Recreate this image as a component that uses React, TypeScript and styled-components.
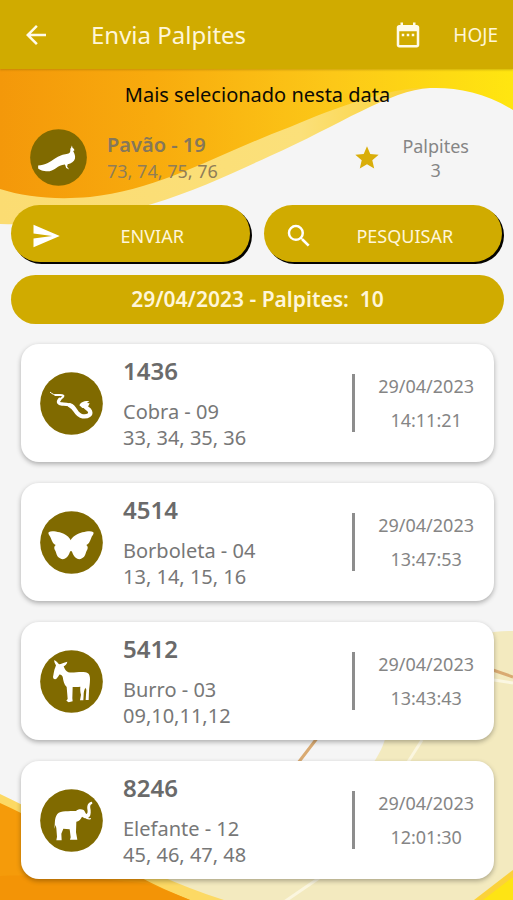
import React from "react";
import styled, { createGlobalStyle } from "styled-components";

const gold = "#d0ab00";
const olive = "#806a00";
const paleText = "#fff6d8";

const GlobalStyle = createGlobalStyle`
  *, *::before, *::after { box-sizing: border-box; }
  body {
    margin: 0;
    background: #f5f5f5;
    font-family: "Noto Sans", "Open Sans", sans-serif;
  }
`;

const Page = styled.div`
  position: relative;
  min-height: 100vh;
  overflow: hidden;
`;

const Backdrop = styled.svg`
  position: absolute;
  inset: 0;
  z-index: -1;
  width: 100%;
  height: 100%;
`;

const Header = styled.header`
  display: flex;
  align-items: center;
  min-height: 69px;
  padding: 0 15px 0 21px;
  background: ${gold};
  box-shadow: 0 1px 2px rgba(120, 90, 0, 0.35);
`;

const IconButton = styled.button`
  display: flex;
  padding: 0;
  border: 0;
  background: none;
  color: #fffbea;
  cursor: pointer;
`;

const Title = styled.h1`
  flex: 1;
  margin: 0 0 0 40px;
  font-size: 24px;
  line-height: 32px;
  font-weight: 400;
  color: ${paleText};
`;

const TodayButton = styled(IconButton)`
  margin-left: 30px;
  font-family: inherit;
  font-size: 19px;
  line-height: 24px;
  color: ${paleText};
`;

const Content = styled.main`
  padding: 10px 9px 21px 11px;
`;

const Subtitle = styled.h2`
  margin: 0;
  text-align: center;
  font-size: 20px;
  line-height: 32px;
  font-weight: 400;
  color: #0c0a04;
`;

const Featured = styled.section`
  display: flex;
  align-items: center;
  margin-top: 18px;
  padding: 0 35px 0 19px;
`;

const Badge = styled.svg<{ $size: number }>`
  flex: none;
  width: ${(p) => p.$size}px;
  height: ${(p) => p.$size}px;
`;

const FeaturedText = styled.div`
  flex: 1;
  margin-left: 20px;
`;

const FeaturedName = styled.p`
  margin: 0;
  font-size: 20px;
  line-height: 27px;
  font-weight: 600;
  color: #85775a;
`;

const FeaturedNumbers = styled.p`
  margin: 0;
  font-size: 18px;
  line-height: 27px;
  color: #8f7d58;
`;

const StarMark = styled.span`
  display: flex;
  color: #d9ae0a;
`;

const Votes = styled.div`
  display: flex;
  flex-direction: column;
  align-items: center;
  margin-left: 21px;
  font-size: 18px;
  line-height: 24px;
  color: #858585;
`;

const Actions = styled.div`
  display: grid;
  grid-template-columns: 1fr 1fr;
  gap: 14px;
  margin-top: 19px;
  padding-right: 2px;
`;

const ActionButton = styled.button`
  display: flex;
  align-items: center;
  height: 57px;
  padding: 4px 20px 0;
  border: 0;
  border-radius: 29px;
  background: ${gold};
  box-shadow: 2px 2px 0 #050400;
  color: #ffffff;
  font-family: inherit;
  font-size: 18px;
  cursor: pointer;
`;

const ActionLabel = styled.span`
  flex: 1;
  padding-left: 14px;
  text-align: center;
  color: ${paleText};
`;

const Summary = styled.p`
  margin: 13px 0 0;
  border-radius: 25px;
  background: ${gold};
  text-align: center;
  white-space: pre;
  font-size: 21px;
  line-height: 49px;
  font-weight: 600;
  color: ${paleText};
`;

const List = styled.ul`
  display: flex;
  flex-direction: column;
  gap: 21px;
  margin: 20px 10px 0;
  padding: 0;
  list-style: none;
`;

const Card = styled.li`
  display: flex;
  align-items: center;
  min-height: 118px;
  padding: 0 20px 0 19px;
  border-radius: 18px;
  background: #ffffff;
  box-shadow: 0 2px 5px rgba(0, 0, 0, 0.3);
`;

const CardText = styled.div`
  flex: 1;
  margin-left: 20px;
`;

const Code = styled.p`
  margin: 0 0 12px;
  font-size: 24px;
  line-height: 32px;
  font-weight: 600;
  color: #6a6a6a;
`;

const Line = styled.p`
  margin: 0;
  font-size: 20px;
  line-height: 26px;
  color: #777777;
`;

const Stamp = styled.div`
  display: flex;
  align-items: center;
  height: 58px;
  padding-left: 23px;
  border-left: 3px solid #8d8d8d;
`;

const StampText = styled.time`
  display: flex;
  flex-direction: column;
  text-align: center;
  font-size: 18px;
  line-height: 34px;
  color: #858585;
`;

type Animal = "peacock" | "snake" | "butterfly" | "donkey" | "elephant";

const shapes: Record<Animal, React.ReactNode> = {
  peacock: (
    <path d="M27 121c10 0 22-3 32-8C75 104 88 92 104 87C116 82 128 84 132 78C136 72 131 66 136 62l3-7 2 7c5 3 6 6 6 9l-4 2c5 9 8 17 6 26c-3 10-12 16-24 18l-2 8 7 9-10-5-4-11c-14 1-20 5-30 12c-12 8-24 13-38 9c-8-1-14-2-21-8z" />
  ),
  snake: (
    <>
      <g fill="none" stroke="#fff" strokeLinecap="round" strokeLinejoin="round">
        <path d="M31 61C37 66 42 69 50 69" strokeWidth="3" />
        <path d="M46 69C56 70 66 67 70 71C72 75 62 79 58 84" strokeWidth="6" />
        <path d="M59 82C52 90 56 95 66 96C78 97 88 97 95 102" strokeWidth="10" />
        <path d="M90 100C108 106 106 130 128 133C144 135 154 128 150 118C147 111 138 109 134 102" strokeWidth="13" />
      </g>
      <path d="M118 100C122 91 130 86 148 87L141 93L149 94L145 102L140 107L127 108Z" />
    </>
  ),
  butterfly: (
    <path d="M92 88c4-9 17-19 35-24 13-3 26-5 32-1 5 4-2 10-5 17-5 12-7 19-15 22 6 5 5 11 1 17-4 8-3 17-14 23-10 6-21 1-27-12-3-7-3-10-6-10s-3 3-6 10c-6 13-17 18-27 12-11-6-10-15-14-23-4-6-5-12 1-17-8-3-10-10-15-22-3-7-10-13-5-17 6-4 19-2 32 1 18 5 29 15 33 24z" />
  ),
  donkey: (
    <path d="M43 30C49 34 54 38 57 43C64 42 71 38 82 35C81 43 75 47 71 49C74 57 78 64 85 67C99 70 119 64 136 67C146 68 150 76 150 87C150 100 148 112 147 122L146 150H137L139 119L136 113C132 121 131 128 131 134L130 151H120L123 134C121 127 120 118 121 110C112 112 105 111 98 111L97 145L98 154L86 157L79 152L83 147L80 111C72 103 70 93 68 80C65 76 62 73 58 74C54 80 51 86 46 88C39 88 38 82 40 76C42 67 42 60 46 52L48 46C45 41 42 36 43 30Z" />
  ),
  elephant: (
    <>
      <path d="M43 120C46 105 42 88 52 75C62 64 88 67 108 66C113 60 124 59 131 63C135 67 136 73 139 75C144 74 143 66 142 60C141 48 145 39 156 38L157 44C148 47 151 55 152 63C153 75 151 84 143 88H138C133 88 129 85 126 83C122 93 116 96 109 98L108 130L112 152H90L92 145L89 121L70 119L64 134L65 154H49L51 143L49 118L47 108Z" />
      <path d="M134 82C140 89 146 91 151 89" fill="none" stroke="#fff" strokeWidth="4" strokeLinecap="round" />
    </>
  ),
};

const AnimalBadge = ({ animal, size }: { animal: Animal; size: number }) => (
  <Badge $size={size} viewBox="0 0 189 189" fill="#fff" aria-hidden="true">
    <circle cx="94.5" cy="94.5" r="94" fill={olive} />
    {shapes[animal]}
  </Badge>
);

const Glyph = ({ d, size }: { d: string; size: number }) => (
  <svg width={size} height={size} viewBox="0 0 24 24" fill="currentColor" aria-hidden="true">
    <path d={d} />
  </svg>
);

const paths = {
  back: "M20 11H7.83l5.59-5.59L12 4l-8 8 8 8 1.41-1.41L7.83 13H20v-2z",
  calendar:
    "M19 4h-1V2h-2v2H8V2H6v2H5C3.9 4 3 4.9 3 6v14c0 1.1.9 2 2 2h14c1.1 0 2-.9 2-2V6c0-1.1-.9-2-2-2zm0 16H5V9h14v11zM7 11h2v2H7zm4 0h2v2h-2zm4 0h2v2h-2z",
  send: "M2.01 21L23 12 2.01 3 2 10l15 2-15 2z",
  search:
    "M15.5 14h-.79l-.28-.27A6.471 6.471 0 0 0 16 9.5 6.5 6.5 0 1 0 9.5 16c1.61 0 3.09-.59 4.23-1.57l.27.28v.79l5 4.99L20.49 19l-4.99-5zm-6 0C7.01 14 5 11.99 5 9.5S7.01 5 9.5 5 14 7.01 14 9.5 11.99 14 9.5 14z",
  star: "M12 17.27L18.18 21l-1.64-7.03L22 9.24l-7.19-.61L12 2 9.19 8.63 2 9.24l5.46 4.73L5.82 21z",
};

const guesses: { code: string; animal: Animal; name: string; numbers: string; time: string }[] = [
  { code: "1436", animal: "snake", name: "Cobra - 09", numbers: "33, 34, 35, 36", time: "14:11:21" },
  { code: "4514", animal: "butterfly", name: "Borboleta - 04", numbers: "13, 14, 15, 16", time: "13:47:53" },
  { code: "5412", animal: "donkey", name: "Burro - 03", numbers: "09,10,11,12", time: "13:43:43" },
  { code: "8246", animal: "elephant", name: "Elefante - 12", numbers: "45, 46, 47, 48", time: "12:01:30" },
];

const Waves = () => (
  <Backdrop viewBox="0 0 513 900" preserveAspectRatio="none" aria-hidden="true">
    <defs>
      <linearGradient id="sun" x1="0" x2="1" y1="0" y2="0">
        <stop offset="0" stopColor="#f4980a" />
        <stop offset="0.3" stopColor="#f8ab0d" />
        <stop offset="0.65" stopColor="#fcc818" />
        <stop offset="1" stopColor="#ffe610" />
      </linearGradient>
      <linearGradient id="band" x1="0" x2="1" y1="0" y2="0">
        <stop offset="0" stopColor="#fbdc72" />
        <stop offset="0.7" stopColor="#fbe07a" />
        <stop offset="1" stopColor="#fbd02c" />
      </linearGradient>
    </defs>
    <path d="M0 60H430V88C390 90 340 125 270 156C200 188 120 228 0 224Z" fill="url(#band)" />
    <path d="M0 60H513V110C485 92 455 87 430 88C395 86 340 106 290 127C220 153 160 190 90 197C55 200 25 197 0 189Z" fill="url(#sun)" />
    <path d="M513 631C440 628 400 700 383 745C365 790 290 850 150 872L215 900H513Z" fill="#f3eabf" />
    <path d="M494 680L513 683" stroke="#fbf7e2" strokeWidth="3" />
    <path d="M422 740L408 762M322 876L284 902" stroke="#fbf6df" strokeWidth="3" />
    <path d="M318 737L298 763M490 669L513 677" stroke="#d9aa72" strokeWidth="3" />
    <path d="M0 794C60 822 130 870 224 900H0Z" fill="#fcd964" />
    <path d="M0 803C60 830 120 872 190 900H0Z" fill="#f59b0a" />
    <path d="M0 876C60 874 110 880 150 884L190 900H0Z" fill="#f39406" />
    <path d="M474 900L513 870V900Z" fill="#fbd23a" />
    <path d="M483 900L513 877V900Z" fill="#fee414" />
  </Backdrop>
);

export default function App() {
  return (
    <Page>
      <GlobalStyle />
      <Waves />
      <Header>
        <IconButton aria-label="Voltar">
          <Glyph d={paths.back} size={30} />
        </IconButton>
        <Title>Envia Palpites</Title>
        <IconButton aria-label="Escolher data">
          <Glyph d={paths.calendar} size={30} />
        </IconButton>
        <TodayButton>HOJE</TodayButton>
      </Header>
      <Content>
        <Subtitle>Mais selecionado nesta data</Subtitle>
        <Featured>
          <AnimalBadge animal="peacock" size={57} />
          <FeaturedText>
            <FeaturedName>Pavão - 19</FeaturedName>
            <FeaturedNumbers>73, 74, 75, 76</FeaturedNumbers>
          </FeaturedText>
          <StarMark>
            <Glyph d={paths.star} size={28} />
          </StarMark>
          <Votes>
            <span>Palpites</span>
            <span>3</span>
          </Votes>
        </Featured>
        <Actions>
          <ActionButton>
            <Glyph d={paths.send} size={30} />
            <ActionLabel>ENVIAR</ActionLabel>
          </ActionButton>
          <ActionButton>
            <Glyph d={paths.search} size={30} />
            <ActionLabel>PESQUISAR</ActionLabel>
          </ActionButton>
        </Actions>
        <Summary>{"29/04/2023 - Palpites:  10"}</Summary>
        <List>
          {guesses.map((g) => (
            <Card key={g.code}>
              <AnimalBadge animal={g.animal} size={63} />
              <CardText>
                <Code>{g.code}</Code>
                <Line>{g.name}</Line>
                <Line>{g.numbers}</Line>
              </CardText>
              <Stamp>
                <StampText>
                  <span>29/04/2023</span>
                  <span>{g.time}</span>
                </StampText>
              </Stamp>
            </Card>
          ))}
        </List>
      </Content>
    </Page>
  );
}
